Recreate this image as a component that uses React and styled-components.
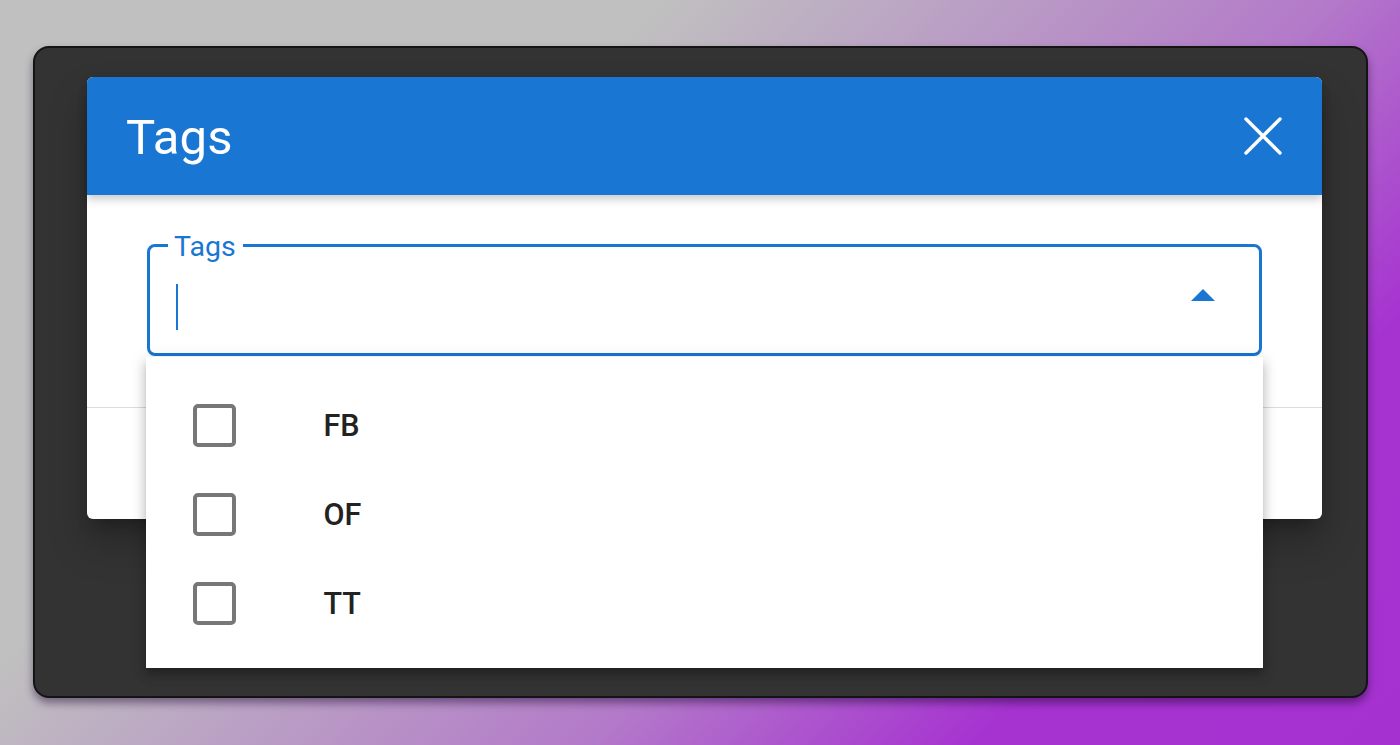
import React from "react";
import styled, { createGlobalStyle } from "styled-components";

const GlobalStyle = createGlobalStyle`
  html, body {
    margin: 0;
    padding: 0;
    width: 1400px;
    height: 745px;
    overflow: hidden;
  }
  body {
    font-family: Roboto, "Liberation Sans", sans-serif;
    background: linear-gradient(135deg, #c0c0c0 0%, #c0c0c0 31%, #b37ac9 62%, #a633d0 80%, #a532d0 100%);
  }
`;

const Stage = styled.div`
  display: flex;
  box-sizing: border-box;
  width: 1400px;
  height: 745px;
  padding: 46px 32px 47px 33px;
`;

const Window = styled.div`
  flex: 1;
  box-sizing: border-box;
  background: #333333;
  border: 2px solid #141414;
  border-radius: 16px;
  box-shadow: 0 5px 8px rgba(20, 0, 40, 0.45);
  padding: 29px 44px 0 52px;
`;

const Dialog = styled.div`
  position: relative;
  height: 442px;
  background: #ffffff;
  border-radius: 6px;
  display: flex;
  flex-direction: column;
  box-shadow: 0 11px 15px -7px rgba(0, 0, 0, 0.3), 0 24px 38px 3px rgba(0, 0, 0, 0.2);
`;

const Header = styled.div`
  height: 118px;
  flex: none;
  box-sizing: border-box;
  display: flex;
  align-items: center;
  justify-content: space-between;
  padding: 0 40px 0 39px;
  background: #1976d2;
  color: #ffffff;
  border-radius: 6px 6px 0 0;
  box-shadow: 0 4px 10px rgba(0, 0, 0, 0.22);
  position: relative;
  z-index: 1;
`;

const Title = styled.h2`
  margin: 0;
  font-size: 49px;
  font-weight: 400;
  letter-spacing: 0.2px;
  padding-top: 2px;
`;

const CloseButton = styled.button`
  border: 0;
  background: none;
  padding: 0;
  width: 38px;
  height: 38px;
  display: flex;
  align-items: center;
  justify-content: center;
  cursor: pointer;
`;

const Content = styled.div`
  height: 213px;
  flex: none;
  box-sizing: border-box;
  padding: 49px 60px 0 60px;
  border-bottom: 1px solid #dcdcdc;
`;

const Field = styled.div`
  position: relative;
  height: 112px;
  box-sizing: border-box;
  border: 3.5px solid #1976d2;
  border-radius: 8px;
  display: flex;
  align-items: center;
  justify-content: space-between;
  padding: 0 44px 0 26px;
`;

const FieldLabel = styled.span`
  position: absolute;
  top: -20px;
  left: 18px;
  padding: 0 7px 0 6px;
  background: #ffffff;
  color: #1976d2;
  font-size: 28.5px;
  line-height: 40px;
`;

const Caret = styled.span`
  width: 2px;
  height: 46px;
  background: #1976d2;
  margin-top: 14px;
`;

const Arrow = styled.svg`
  margin-top: -12px;
`;

const Menu = styled.ul`
  position: absolute;
  top: 110px;
  left: -4.5px;
  width: 1117px;
  height: 311px;
  box-sizing: border-box;
  margin: 0;
  padding: 24px 0 0;
  list-style: none;
  background: #ffffff;
  box-shadow: 0 5px 5px -3px rgba(0, 0, 0, 0.2), 0 8px 10px 1px rgba(0, 0, 0, 0.14), 0 3px 14px 2px rgba(0, 0, 0, 0.12);
  z-index: 2;
`;

const Option = styled.li`
  height: 89px;
  display: flex;
  align-items: center;
  padding-left: 47px;
  color: #222222;
  font-size: 30.5px;
  font-weight: 500;
`;

const Box = styled.span`
  width: 43px;
  height: 43px;
  box-sizing: border-box;
  border: 4.5px solid #777777;
  border-radius: 5px;
  margin-right: 88px;
  flex: none;
`;

const Actions = styled.div`
  flex: 1;
`;

const tags = ["FB", "OF", "TT"];

export default function App() {
  return (
    <>
      <GlobalStyle />
      <Stage>
        <Window>
          <Dialog>
            <Header>
              <Title>Tags</Title>
              <CloseButton aria-label="close">
                <svg width="38" height="38" viewBox="0 0 38 38">
                  <path d="M2 2 L36 36 M36 2 L2 36" stroke="#ffffff" strokeWidth="3.4" strokeLinecap="round" />
                </svg>
              </CloseButton>
            </Header>
            <Content>
              <Field>
                <FieldLabel>Tags</FieldLabel>
                <Caret />
                <Arrow width="24" height="13" viewBox="0 0 24 13">
                  <path d="M0 13 L12 1 L24 13 Z" fill="#1976d2" />
                </Arrow>
                <Menu>
                  {tags.map((t) => (
                    <Option key={t}>
                      <Box />
                      {t}
                    </Option>
                  ))}
                </Menu>
              </Field>
            </Content>
            <Actions />
          </Dialog>
        </Window>
      </Stage>
    </>
  );
}
